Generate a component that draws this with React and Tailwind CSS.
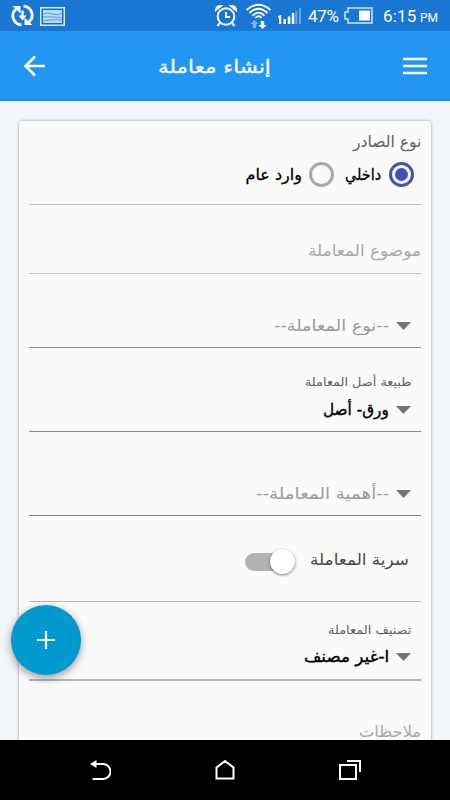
import { useLayoutEffect, useRef, useState } from "react";

// Single line of right-to-left text condensed or widened to its column.
function FitText({ width, className = "", children }) {
  const ref = useRef(null);
  const [scale, setScale] = useState(1);
  useLayoutEffect(() => {
    setScale(width / ref.current.offsetWidth);
  }, [width, children]);
  return (
    <span dir="rtl" className={"flex shrink-0 justify-start whitespace-nowrap " + className} style={{ width }}>
      <span ref={ref} className="block shrink-0 origin-right" style={{ transform: `scaleX(${scale})` }}>
        {children}
      </span>
    </span>
  );
}

function StatusBar() {
  return (
    <div className="flex h-[31px] shrink-0 items-center bg-[#1976d2] text-white">
      <svg className="ml-[11px] h-[23px] w-[23px]" viewBox="0 0 23 23" fill="none" stroke="white" strokeWidth="2.8">
        <path d="M10.5 20.8A9 9 0 0 1 5 5M12.5 2.2A9 9 0 0 1 18 18" />
        <path d="M1.5 2H9.5V9.5ZM21.5 21H13.5V13.5Z" fill="white" stroke="none" />
        <path d="M11.5 6.5V12.5" strokeWidth="2.4" />
        <path d="M7.5 11.5H15.5L11.5 16.5Z" fill="white" stroke="none" />
      </svg>
      <svg className="mt-[1px] ml-[6px] h-[19px] w-[25px]" viewBox="0 0 25 19">
        <rect x=".75" y=".75" width="23.5" height="17.5" fill="#176dbd" stroke="#d5f2fb" strokeWidth="1.5" />
        <rect x="3" y="3" width="19" height="13" fill="#b4dcf4" />
        <path d="M3 7Q8 5 13 7T22 6M3 10Q11 9 22 11M3 14Q12 12 22 13" stroke="#5f9fd4" fill="none" />
      </svg>
      <svg className="ml-[149px] h-6 w-6" viewBox="0 0 24 24" fill="none" stroke="white" strokeWidth="2">
        <circle cx="12" cy="12.5" r="8.3" />
        <path d="M12 8V13H16" strokeWidth="1.8" />
        <path d="M6 19L3.5 22M18 19L20.5 22" />
        <path d="M1.8 6.5Q1.5 1.5 7.5 1.8ZM22.2 6.5Q22.5 1.5 16.5 1.8Z" fill="white" strokeWidth="1.5" />
      </svg>
      <svg className="ml-[7px] h-[26px] w-[27px]" viewBox="0 0 27 26" fill="none" stroke="white" strokeWidth="1.8">
        <path d="M1.5 7Q13.5-3.5 25.5 7M4.5 10Q13.5 1.5 22.5 10M7.5 12.8Q13.5 6.5 19.5 12.8M10.5 15Q13.5 11.5 16.5 15" />
        <path d="M9.5 17L13.5 21H11.2V25H7.8V21H5.5Z" fill="#75b5ef" stroke="none" />
        <path d="M17.5 26L21.5 22H19.2V18H15.8V22H13.5Z" fill="white" stroke="none" />
      </svg>
      <svg className="ml-[6px] h-[17px] w-[24px]" viewBox="0 0 24 17">
        <path d="M0 9L3.2 8V17H1V10.5H0ZM5.5 12H8V17H5.5ZM9.8 9.5H12.3V17H9.8ZM13.8 6H16.3V17H13.8Z" fill="white" />
        <path d="M17.3 3.5H19.3V17H17.3ZM21 1H23V17H21Z" fill="#64a8e7" />
      </svg>
      <span className="ml-[6px] w-[36px] pt-[2px] font-[Roboto,sans-serif] text-[17px] tracking-[-0.3px] whitespace-nowrap">47%</span>
      <svg className="h-[17px] w-[29px]" viewBox="0 0 29 17">
        <path d="M4 1H28V16H4V12H1V5H4Z" fill="none" stroke="#c5eafa" strokeWidth="1.5" />
        <rect x="15" y="3.5" width="11" height="10" fill="white" />
      </svg>
      <span className="ml-[10px] w-[36px] pt-[2px] font-[Roboto,sans-serif] text-[17px] tracking-[0.2px] whitespace-nowrap">6:15</span>
      <span className="ml-[1px] pt-[4px] font-[Roboto,sans-serif] text-[12px] whitespace-nowrap">PM</span>
    </div>
  );
}

function Header() {
  return (
    <header className="flex h-[70px] shrink-0 items-center border-b border-[#1b83dc] bg-[#2196f3] pl-6 text-white">
      <svg className="size-[22px]" viewBox="0 0 22 22" fill="none" stroke="white" strokeWidth="2.5">
        <path d="M11 1.5L1.5 11L11 20.5M2 11H21" />
      </svg>
      <FitText width={113} className="mt-[2px] ml-[112px] text-[18px] [-webkit-text-stroke:0.3px_white]">إنشاء معاملة</FitText>
      <svg className="ml-[132px] h-[18px] w-6" viewBox="0 0 24 18" stroke="white" strokeWidth="2.4">
        <path d="M0 2H24M0 9H24M0 16H24" />
      </svg>
    </header>
  );
}

function Radio({ checked = false }) {
  return (
    <span className={"flex size-[25px] shrink-0 items-center justify-center rounded-full border-3 " + (checked ? "border-[#3f51b5]" : "border-[#a8a8a8]")}>
      {checked && <span className="size-[13px] rounded-full bg-[#3f51b5]" />}
    </span>
  );
}

function SelectValue({ width, placeholder = false, children }) {
  return (
    <div dir="rtl" className="flex h-6 items-center pr-[10px]">
      <svg className="h-[8px] w-[15px] shrink-0" viewBox="0 0 15 8"><path d="M0 0H15L7.5 8Z" fill="#737373" /></svg>
      <FitText width={width} className={"mr-[7px] text-[16px] " + (placeholder ? "text-[#9b9b9b]" : "text-black [-webkit-text-stroke:0.4px_black]")}>{children}</FitText>
    </div>
  );
}

export default function App() {
  return (
    <div className="relative flex h-[800px] w-[450px] flex-col overflow-hidden bg-[#f2f6fa] font-['DejaVu_Sans',sans-serif]">
      <StatusBar />
      <Header />
      <main className="min-h-0 flex-1 overflow-hidden px-[19px] pt-5">
        <form className="h-[700px] rounded-[3px] bg-[#fafafa] px-[10px] shadow-[0_0_3px_rgba(0,0,0,0.4)]">
          <section dir="rtl" className="h-[84px] border-b border-[#c5c5c5] pt-[9px]">
            <FitText width={68} className="h-6 items-center text-[16px] text-[#606060]">نوع الصادر</FitText>
            <div className="mt-[8px] flex h-[25px] items-center pr-[7px] text-[16px] text-black [-webkit-text-stroke:0.3px_black]">
              <Radio checked />
              <FitText width={36} className="mr-[8px]">داخلي</FitText>
              <span className="mr-[11px] flex"><Radio /></span>
              <FitText width={56} className="mr-[7px]">وارد عام</FitText>
            </div>
          </section>
          <section dir="rtl" className="flex h-[69px] items-end border-b border-[#c5c5c5] pb-[10px]">
            <FitText width={113} className="h-6 items-center text-[16px] text-[#a8a8a8]">موضوع المعاملة</FitText>
          </section>
          <section className="flex h-[74px] flex-col justify-end border-b border-[#888888] pb-[9px]">
            <SelectValue width={115} placeholder>--نوع المعاملة--</SelectValue>
          </section>
          <section className="flex h-[84px] flex-col justify-end border-b border-[#888888] pb-[9px]">
            <div dir="rtl" className="mb-[6px] pr-[10px]">
              <FitText width={106} className="h-5 items-center text-[12px] text-[#606060]">طبيعة أصل المعاملة</FitText>
            </div>
            <SelectValue width={66}>ورق- أصل</SelectValue>
          </section>
          <section className="flex h-[84px] flex-col justify-end border-b border-[#808080] pb-[9px]">
            <SelectValue width={133} placeholder>--أهمية المعاملة--</SelectValue>
          </section>
          <section dir="rtl" className="flex h-[86px] items-center border-b border-[#b5b5b5] pt-[2px] pr-[12px]">
            <FitText width={99} className="text-[16px] text-[#484848]">سرية المعاملة</FitText>
            <span className="mt-[4px] mr-[15px] flex h-[18px] w-[50px] items-center rounded-full bg-[#b2b2b2]">
              <span className="size-[25px] shrink-0 rounded-full bg-white shadow-[0_1px_3px_rgba(0,0,0,0.5)]" />
            </span>
          </section>
          <section className="flex h-[79px] flex-col justify-end border-b-2 border-[#b5b5b5] pb-[10px]">
            <div dir="rtl" className="mb-[5px] pr-[10px]">
              <FitText width={83} className="h-5 items-center text-[12px] text-[#606060]">تصنيف المعاملة</FitText>
            </div>
            <SelectValue width={85}>ا-غير مصنف</SelectValue>
          </section>
          <section dir="rtl" className="pt-[39px]">
            <FitText width={62} className="h-6 items-center text-[16px] leading-5 text-[#a8a8a8]">ملاحظات</FitText>
          </section>
        </form>
      </main>
      <nav className="flex h-[60px] shrink-0 items-center justify-between bg-black pr-[89px] pl-[89px]">
        <svg className="size-[22px]" viewBox="0 0 22 22" fill="none" stroke="white" strokeWidth="2">
          <path d="M4 5H14A7 7 0 0 1 14 20H3.5" />
          <path d="M1 5L7.5 1V9Z" fill="white" stroke="none" />
        </svg>
        <svg className="mr-[1px] size-[22px]" viewBox="0 0 22 22" fill="none" stroke="white" strokeWidth="2">
          <path d="M2.5 19.5V8.5L11 2L19.5 8.5V19.5Z" />
        </svg>
        <svg className="size-[22px]" viewBox="0 0 22 22" fill="none" stroke="white" strokeWidth="2">
          <path d="M1 6H17V20H1ZM8 2H21V13" />
        </svg>
      </nav>
      <button aria-label="+" className="absolute top-[605px] left-[11px] flex size-[70px] items-center justify-center rounded-full bg-[#0299cf] shadow-[0_3px_8px_rgba(0,0,0,0.4)]">
        <svg className="size-[18px]" viewBox="0 0 18 18" stroke="white" strokeWidth="2.2"><path d="M9 0V18M0 9H18" /></svg>
      </button>
    </div>
  );
}
